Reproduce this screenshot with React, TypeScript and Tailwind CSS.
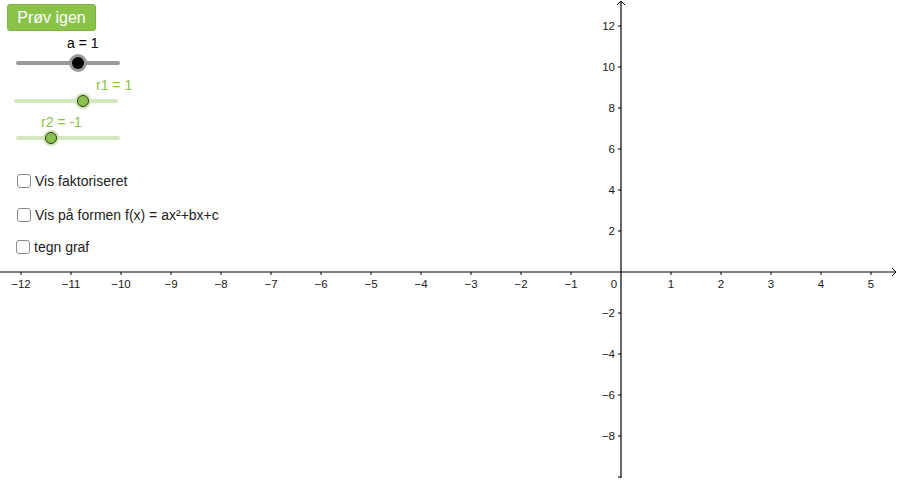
import React from 'react';

const FONT = { fontFamily: '"Liberation Sans", Arial, sans-serif' };

const OX = 621;
const OY = 272;
const UX = 50;
const UY = 20.5;

const xTicks = [-12, -11, -10, -9, -8, -7, -6, -5, -4, -3, -2, -1, 1, 2, 3, 4, 5];
const yTicks = [12, 10, 8, 6, 4, 2, -2, -4, -6, -8];

function fmt(n: number) {
  return n < 0 ? `\u2212${Math.abs(n)}` : `${n}`;
}

function Axes() {
  return (
    <svg width={900} height={480} className="block" style={FONT}>
      {/* x-axis */}
      <line x1={0} y1={OY} x2={896} y2={OY} stroke="#000" strokeWidth={1.2} />
      <polyline points={`892,268 896,${OY} 892,276`} fill="none" stroke="#000" strokeWidth={1} />
      {/* y-axis */}
      <line x1={OX} y1={1} x2={OX} y2={478} stroke="#000" strokeWidth={1.2} />
      <polyline points={`617,5 ${OX},1 625,5`} fill="none" stroke="#000" strokeWidth={1} />

      {xTicks.map((n) => {
        const x = OX + n * UX;
        return (
          <g key={`x${n}`}>
            <line x1={x} y1={OY} x2={x} y2={OY + 3} stroke="#000" strokeWidth={1} />
            <text x={x} y={288} fontSize={11.5} textAnchor="middle" fill="#1a1a1a">
              {fmt(n)}
            </text>
          </g>
        );
      })}
      <text x={614} y={288} fontSize={11.5} textAnchor="middle" fill="#1a1a1a">
        0
      </text>

      {yTicks.map((n) => {
        const y = OY - n * UY;
        return (
          <g key={`y${n}`}>
            <line x1={OX - 3} y1={y} x2={OX} y2={y} stroke="#000" strokeWidth={1} />
            <text x={615} y={y + 4} fontSize={11.5} textAnchor="end" fill="#1a1a1a">
              {fmt(n)}
            </text>
          </g>
        );
      })}
      <line x1={OX - 3} y1={477} x2={OX} y2={477} stroke="#000" strokeWidth={1} />
    </svg>
  );
}

function Checkbox({ label, indent }: { label: string; indent: string }) {
  return (
    <div className={`flex h-[16px] items-center gap-[4px] ${indent}`}>
      <span className="h-[14px] w-[14px] rounded-[3px] border-[1.5px] border-[#8a8a8a] bg-white" />
      <span className="text-[14px] leading-[16px] text-[#222]">{label}</span>
    </div>
  );
}

export default function App() {
  return (
    <div className="relative h-[480px] w-[900px] overflow-hidden bg-white" style={FONT}>
      <Axes />

      <div className="absolute left-0 top-0 flex flex-col pt-[4px]">
        <button
          type="button"
          className="ml-[7px] flex h-[27px] w-[89px] items-center justify-center rounded-[3px] border border-[#7cb342] bg-[#8bc34a] text-[16px] text-white"
        >
          Prøv igen
        </button>

        {/* slider a */}
        <div className="ml-[67px] mt-[4px] h-[16px] text-[14px] leading-[16px] text-black">a = 1</div>
        <div className="relative ml-[16px] mt-[10px] h-[4px] w-[104px] rounded-full bg-[#999999]">
          <span className="absolute left-[53px] top-[-7px] h-[18px] w-[18px] rounded-full bg-[#9a9a9a]" />
          <span className="absolute left-[56px] top-[-4px] h-[12px] w-[12px] rounded-full bg-black" />
        </div>

        {/* slider r1 */}
        <div className="ml-[96px] mt-[12px] h-[16px] text-[14px] leading-[16px] text-[#8bc34a]">r1 = 1</div>
        <div className="relative ml-[14px] mt-[6px] h-[4px] w-[104px] rounded-full bg-[#d4e8bf]">
          <span className="absolute left-[61px] top-[-6px] h-[16px] w-[16px] rounded-full bg-[#cfe7b4]" />
          <span className="absolute left-[63px] top-[-4px] h-[12px] w-[12px] rounded-full border border-[#333] bg-[#8bc34a]" />
        </div>

        {/* slider r2 */}
        <div className="ml-[41px] mt-[11px] h-[16px] text-[14px] leading-[16px] text-[#8bc34a]">r2 = -1</div>
        <div className="relative ml-[16px] mt-[6px] h-[4px] w-[104px] rounded-full bg-[#d4e8bf]">
          <span className="absolute left-[27px] top-[-6px] h-[16px] w-[16px] rounded-full bg-[#cfe7b4]" />
          <span className="absolute left-[29px] top-[-4px] h-[12px] w-[12px] rounded-full border border-[#333] bg-[#8bc34a]" />
        </div>

        <div className="mt-[33px]">
          <Checkbox label="Vis faktoriseret" indent="ml-[17px]" />
        </div>
        <div className="mt-[18px]">
          <Checkbox label="Vis på formen f(x) = ax²+bx+c" indent="ml-[17px]" />
        </div>
        <div className="mt-[16px]">
          <Checkbox label="tegn graf" indent="ml-[16px]" />
        </div>
      </div>
    </div>
  );
}
